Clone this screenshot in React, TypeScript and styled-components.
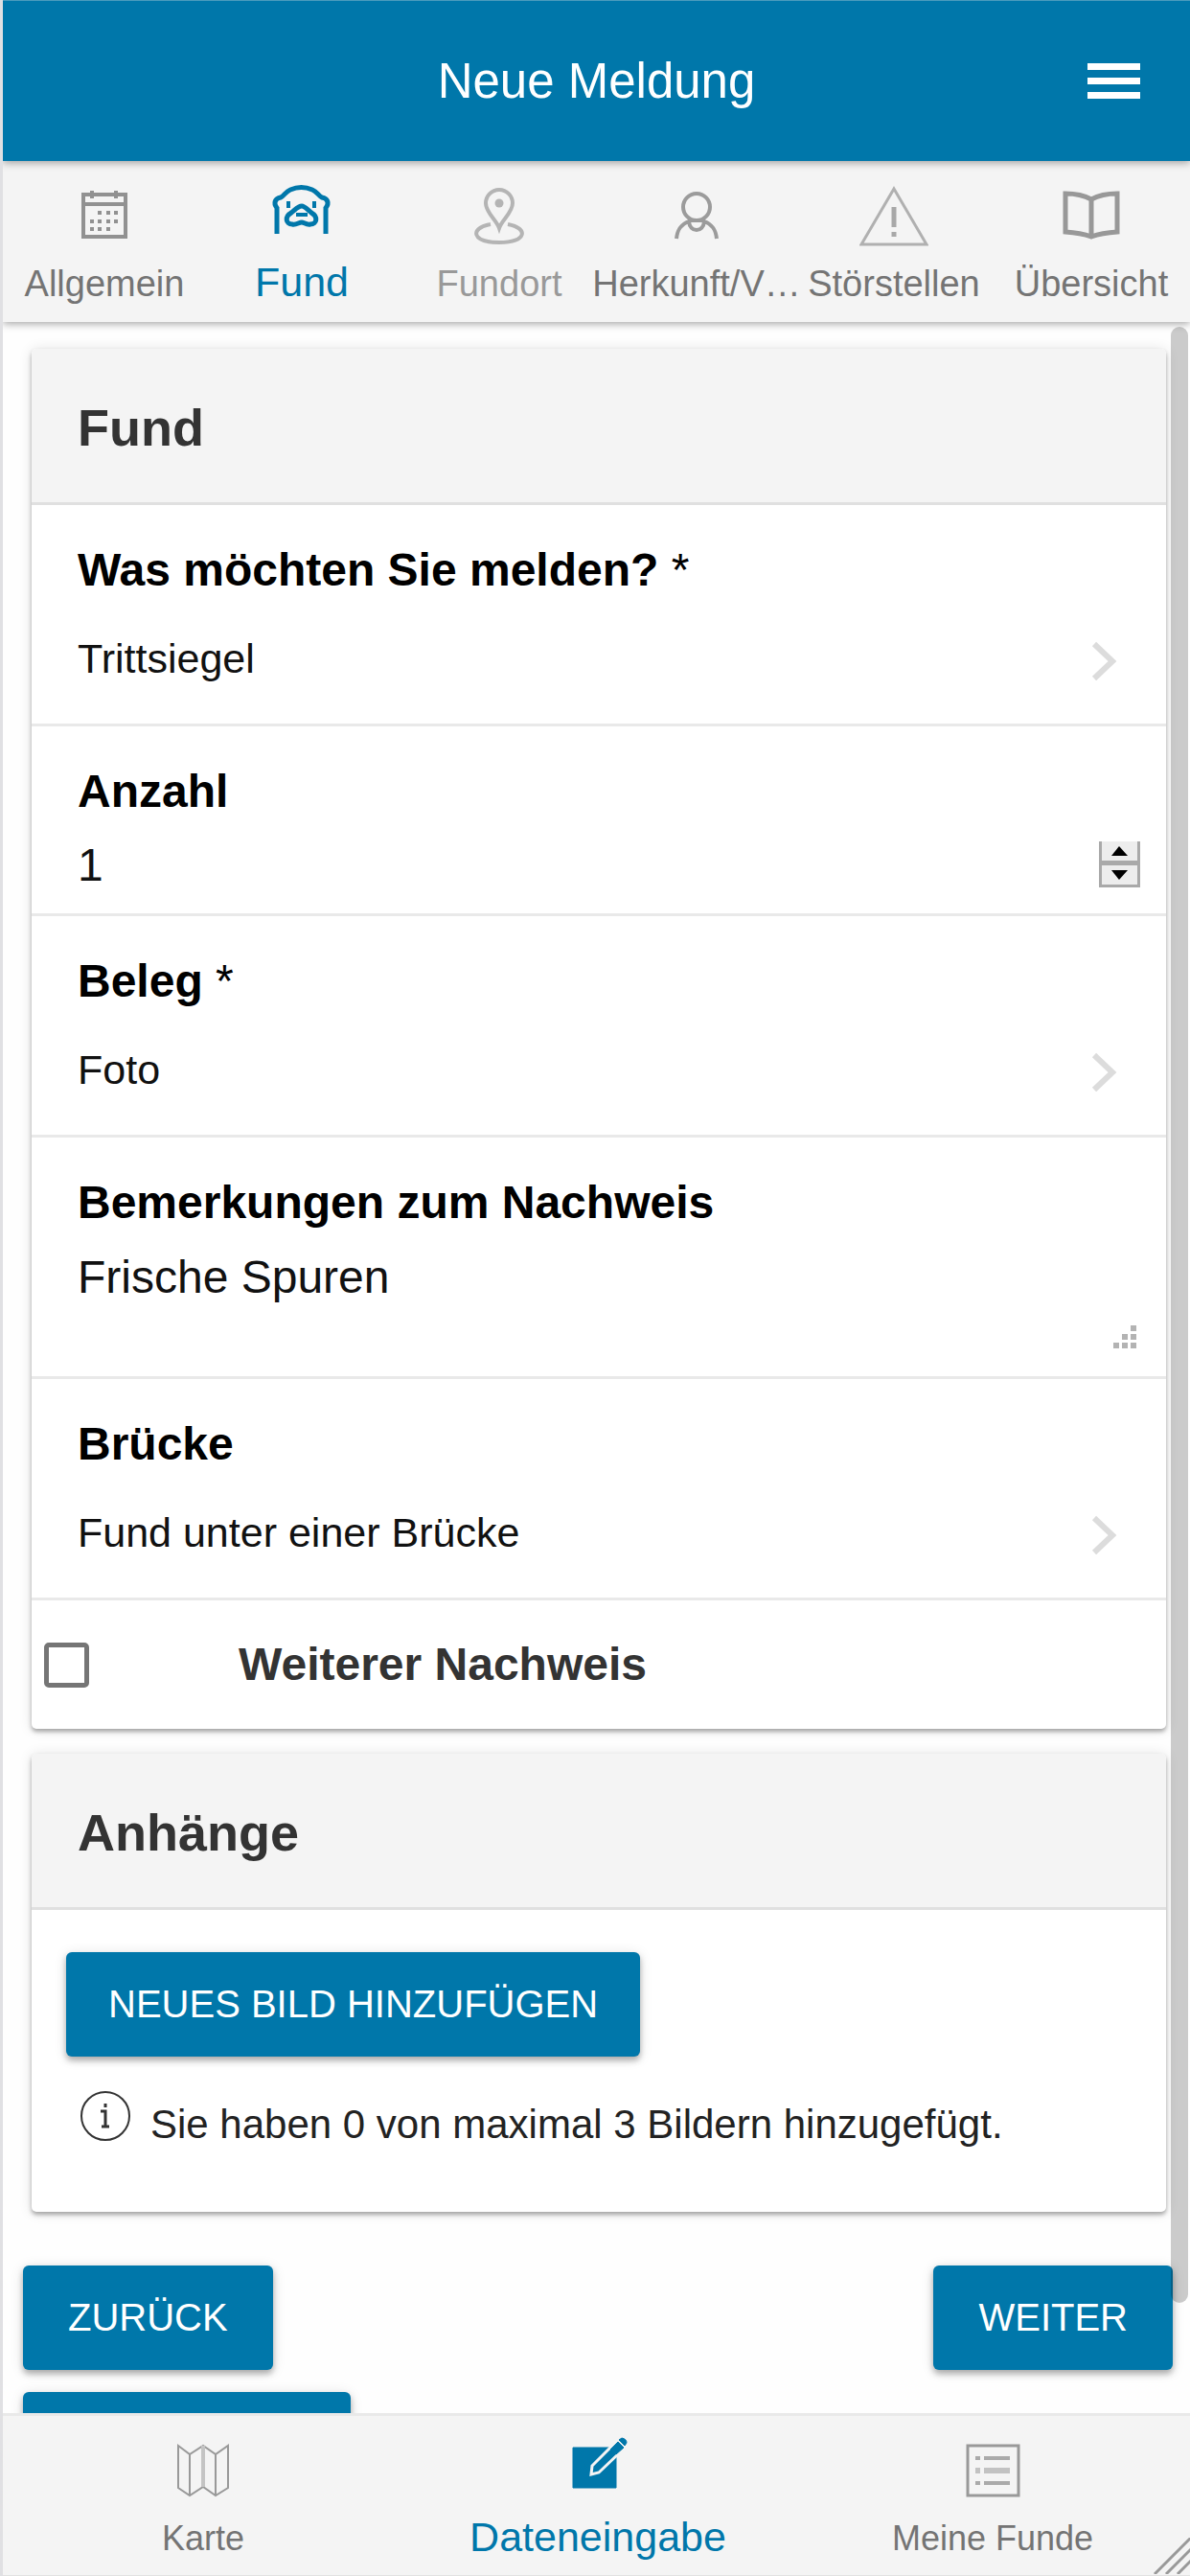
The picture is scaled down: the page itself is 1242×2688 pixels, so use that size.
import React, { useId, useState } from 'react';
import styled, { createGlobalStyle } from 'styled-components';

const brand = '#0077aa';
const panel = '#f4f4f4';
const fontStack = '"Liberation Sans", Arial, sans-serif';

const GlobalStyle = createGlobalStyle`
  *, *::before, *::after { box-sizing: border-box; }
  html, body, #root { height: 100%; }
  body {
    margin: 0;
    background: #fefefe;
    color: #000;
    font-family: ${fontStack};
  }
  button, input, select, textarea { font-family: inherit; }
`;

const Shell = styled.div`
  display: flex;
  flex-direction: column;
  position: relative;
  height: 100vh;
  overflow: hidden;
  border-left: 3px solid #e0e0e3;
  background: #fefefe;
`;

const Header = styled.header`
  display: grid;
  grid-template-columns: 1fr auto 1fr;
  align-items: center;
  flex: none;
  height: 168px;
  padding: 0 52px;
  background: ${brand};
  border-top: 1px solid #4a9bbd;
  color: #fff;
  z-index: 3;
  box-shadow: 0 2px 8px rgba(0, 0, 0, 0.35);
`;

const Title = styled.h1`
  grid-column: 2;
  margin: 0;
  font-size: 51px;
  line-height: 56px;
  font-weight: 400;
`;

const MenuButton = styled.button`
  justify-self: end;
  display: grid;
  gap: 8px;
  width: 55px;
  padding: 0;
  border: 0;
  background: none;
  cursor: pointer;
`;

const MenuBar = styled.span`
  height: 7px;
  background: #fff;
`;

const Tabs = styled.nav`
  display: grid;
  grid-template-columns: repeat(6, minmax(0, 1fr));
  flex: none;
  height: 168px;
  padding-left: 3px;
  background: ${panel};
  z-index: 2;
  box-shadow: 0 2px 8px rgba(0, 0, 0, 0.35);
`;

const BottomBar = styled.nav`
  display: grid;
  grid-template-columns: repeat(3, minmax(0, 1fr));
  flex: none;
  height: 170px;
  padding-left: 3px;
  background: ${panel};
  border-top: 3px solid #e9e9e9;
  border-bottom: 1px solid #e2e2e2;
  z-index: 2;
`;

const TabLink = styled.a<{ $size: number; $active?: boolean; $muted?: boolean }>`
  display: flex;
  flex-direction: column;
  align-items: center;
  padding-top: 20px;
  gap: 12px;
  color: ${p => (p.$active ? brand : p.$muted ? '#999' : '#747474')};
  font-size: ${p => (p.$active ? 43 : p.$size)}px;
  line-height: ${p => (p.$active ? 44 : 48)}px;
  white-space: nowrap;
  text-decoration: none;
`;

const TabIcon = styled.svg`
  flex: none;
  width: 72px;
  height: 72px;
  fill: none;
  stroke: currentColor;
`;

const Viewport = styled.main`
  flex: 1;
  min-height: 0;
  overflow: hidden;
  padding: 28px 25px 0 30px;
`;

const Card = styled.section`
  margin-bottom: 26px;
  border-radius: 5px;
  background: #fff;
  box-shadow: 0 3px 4px rgba(0, 0, 0, 0.3), 0 1px 14px rgba(0, 0, 0, 0.12);
`;

const CardTitle = styled.h2`
  display: flex;
  align-items: center;
  height: 163px;
  margin: 0;
  padding: 4px 48px 0;
  border-bottom: 3px solid #e0e0e0;
  border-radius: 5px 5px 0 0;
  background: ${panel};
  color: #333;
  font-size: 54px;
  line-height: 60px;
`;

const Field = styled.div`
  display: flex;
  flex-direction: column;
  position: relative;
  padding: 40px 27px 0 48px;
  border-bottom: 3px solid #e9e9e9;
`;

const SelectField = styled(Field)`
  height: 231px;
`;

const NumberField = styled(Field)`
  height: 198px;
`;

const TextField = styled(Field)`
  height: 252px;
`;

const Label = styled.label`
  font-size: 48px;
  line-height: 56px;
  font-weight: 700;
`;

const Star = styled.span`
  font-weight: 400;
`;

const SelectRow = styled.div`
  display: flex;
  align-items: flex-end;
  height: 60px;
  margin-top: 34px;
  padding-right: 24px;
`;

const Select = styled.select`
  flex: 1;
  min-width: 0;
  height: 60px;
  padding: 0;
  border: 0;
  background: none;
  appearance: none;
  color: #111;
  font-size: 43px;
  outline: none;
`;

const Chevron = styled.svg`
  width: 28px;
  height: 54px;
  fill: none;
  stroke: #dcdcdc;
  stroke-width: 6;
`;

const NumberRow = styled.div`
  display: flex;
  align-items: center;
  height: 56px;
  margin-top: 20px;
`;

const NumberInput = styled.input`
  flex: 1;
  min-width: 0;
  height: 56px;
  padding: 0;
  border: 0;
  background: none;
  color: #111;
  font-size: 48px;
  outline: none;
  appearance: textfield;
  &::-webkit-inner-spin-button,
  &::-webkit-outer-spin-button { appearance: none; margin: 0; }
`;

const Spinner = styled.div`
  display: grid;
  grid-template-rows: 1fr 1fr;
  gap: 5px;
  width: 43px;
  height: 48px;
  padding: 0 3px 3px;
  background: #a9a9a9;
`;

const SpinButton = styled.button`
  display: grid;
  place-items: center;
  min-height: 0;
  padding: 0;
  border: 0;
  background: #ededed;
`;

const Arrow = styled.svg`
  width: 17px;
  height: 10px;
  fill: #000;
`;

const TextArea = styled.textarea`
  height: 100px;
  margin-top: 22px;
  padding: 0;
  border: 0;
  background: none;
  resize: none;
  color: #111;
  font-size: 48px;
  line-height: 56px;
  outline: none;
`;

const Grip = styled.svg`
  position: absolute;
  right: 31px;
  bottom: 29px;
  width: 24px;
  height: 24px;
  fill: #b3b3b3;
`;

const CheckLabel = styled.label`
  display: flex;
  align-items: center;
  gap: 156px;
  height: 134px;
  padding-left: 13px;
  color: #333;
  font-size: 48px;
  line-height: 56px;
  font-weight: 700;
`;

const CheckBox = styled.input`
  width: 47px;
  height: 47px;
  margin: 0;
  border: 5px solid #757575;
  border-radius: 5px;
  background: #fff;
  appearance: none;
  &:checked { background: ${brand}; }
`;

const Attachments = styled.div`
  padding: 44px 36px 63px;
`;

const Button = styled.button<{ $pad: number }>`
  display: block;
  height: 109px;
  padding: 0 ${p => p.$pad}px;
  border: 0;
  border-radius: 6px;
  background: ${brand};
  color: #fff;
  font-size: 40px;
  text-transform: uppercase;
  white-space: nowrap;
  cursor: pointer;
  box-shadow: 0 4px 6px rgba(0, 0, 0, 0.28), 0 2px 14px rgba(0, 0, 0, 0.12);
`;

const WideButton = styled(Button)`
  width: 342px;
`;

const Info = styled.p`
  display: flex;
  gap: 20px;
  margin: 35px 0 0;
  padding-left: 14px;
  color: #222;
  font-size: 42px;
  line-height: 56px;
`;

const InfoIcon = styled.svg`
  flex: none;
  width: 54px;
  height: 54px;
  fill: none;
  stroke: #333;
`;

const InfoText = styled.span`
  padding-top: 8px;
`;

const Actions = styled.div`
  display: flex;
  flex-direction: column;
  align-items: flex-start;
  gap: 23px;
  margin: 56px -7px 0 -9px;
`;

const ActionRow = styled.div`
  display: flex;
  justify-content: space-between;
  width: 100%;
`;

const ScrollThumb = styled.div`
  position: absolute;
  top: 341px;
  right: 2px;
  bottom: 285px;
  width: 18px;
  border-radius: 9px;
  background: rgba(0, 0, 0, 0.2);
  z-index: 1;
`;

const WindowGrip = styled.svg`
  position: absolute;
  right: 0;
  bottom: 2px;
  width: 38px;
  height: 38px;
  fill: none;
  stroke: #999;
  stroke-width: 3;
  z-index: 3;
`;

const CalendarIcon = () => (
  <TabIcon viewBox="0 0 72 72" strokeWidth="4">
    <path d="M14 15H58V59H14ZM14 25H58M23 11V19M48 11V19" stroke="#919191" />
    <path
      d="M29 34h4M38 34h4M46 34h4M21 43h4M29 43h4M38 43h4M46 43h4M21 51h4M29 51h4M38 51h4"
      stroke="#919191"
    />
  </TabIcon>
);

const OtterIcon = () => (
  <TabIcon viewBox="0 0 72 72" strokeWidth="5">
    <path d="M10 56V29C6 24 8 19 14 18C18 16 19 12 24 10C31 7 40 7 47 10C52 12 53 16 57 18C63 19 65 24 61 29V56" />
    <path d="M22 22V29M49 22V29" strokeWidth="4" />
    <path d="M36 27C32 27 29 31 25 34C18 38 19 46 26 46C30 47 33 44 36 44C38 44 41 47 45 46C52 46 53 38 46 34C42 31 39 27 36 27Z" />
    <path d="M30 36H42" strokeWidth="4" />
  </TabIcon>
);

const PinIcon = () => (
  <TabIcon viewBox="0 0 72 72" strokeWidth="4">
    <path
      d="M36 50C33 41 22 34 22 24A14 14 0 0 1 50 24C50 34 39 41 36 50Z"
      stroke="#b4b4b4"
    />
    <circle cx="36" cy="24" r="4.5" fill="#b4b4b4" stroke="none" />
    <path d="M27 46C5 50 7 65 36 65C65 65 67 50 45 46" stroke="#b4b4b4" />
  </TabIcon>
);

const PersonIcon = () => (
  <TabIcon viewBox="0 0 72 72" strokeWidth="4">
    <circle cx="36" cy="28" r="14" stroke="#9b9b9b" />
    <path
      d="M15 61C16 51 20 46 28 43C29 55 43 55 44 43C52 46 56 51 57 61M27 42H45"
      stroke="#9b9b9b"
    />
  </TabIcon>
);

const WarningIcon = () => (
  <TabIcon viewBox="0 0 72 72" strokeWidth="3">
    <path d="M36 9L70 67H2Z" stroke="#b0b0b0" />
    <path d="M36 28V49M36 54V59" stroke="#a8a8a8" strokeWidth="5" />
  </TabIcon>
);

const BookIcon = () => (
  <TabIcon viewBox="0 0 72 72" strokeWidth="5">
    <path d="M9 14Q25 14 36 20Q47 14 63 14V54Q47 55 36 59Q25 55 9 54ZM36 20V59" stroke="#989898" />
  </TabIcon>
);

const MapIcon = () => (
  <TabIcon viewBox="0 0 72 72" strokeWidth="2">
    <path
      d="M10 11L22 20L36 11L49 20L62 11V55L49 63L36 54L22 63L10 55ZM22 20V63M49 20V63"
      stroke="#999"
    />
    <path d="M36 11V54" stroke="#c4c4c4" strokeWidth="4" />
  </TabIcon>
);

const EditIcon = () => (
  <TabIcon viewBox="0 0 72 72" stroke="none">
    <path d="M10 13H55V55H10Z" fill={brand} />
    <path d="M30 32L50 12L57 20L37 39L29 41Z" fill={brand} stroke={panel} strokeWidth="3" />
    <path d="M49 15L57 7L63 13L55 20Z" fill={brand} />
    <path d="M58 5L61 3Q66 4 66 8L64 11Z" fill={brand} />
  </TabIcon>
);

const ListIcon = () => (
  <TabIcon viewBox="0 0 72 72" strokeWidth="3">
    <path d="M10 11H63V63H10Z" stroke="#999" />
    <path d="M18 24h5M27 24H54M18 50h5M27 50H54" stroke="#aaa" strokeWidth="4" />
    <path d="M18 37h5M27 37H54" stroke="#c2c2c2" strokeWidth="6" />
  </TabIcon>
);

const steps = [
  { label: 'Allgemein', icon: <CalendarIcon /> },
  { label: 'Fund', icon: <OtterIcon />, active: true },
  { label: 'Fundort', icon: <PinIcon />, muted: true },
  { label: 'Herkunft/V…', icon: <PersonIcon /> },
  { label: 'Störstellen', icon: <WarningIcon /> },
  { label: 'Übersicht', icon: <BookIcon /> },
];

const sections = [
  { label: 'Karte', icon: <MapIcon /> },
  { label: 'Dateneingabe', icon: <EditIcon />, active: true },
  { label: 'Meine Funde', icon: <ListIcon /> },
];

function Dropdown({ label, value, required }: { label: string; value: string; required?: boolean }) {
  const id = useId();
  return (
    <SelectField>
      <Label htmlFor={id}>
        {label}
        {required && <Star> *</Star>}
      </Label>
      <SelectRow>
        <Select id={id} defaultValue={value}>
          <option value={value}>{value}</option>
        </Select>
        <Chevron viewBox="0 0 28 54" aria-hidden="true">
          <path d="M4 9L23 27L4 45" />
        </Chevron>
      </SelectRow>
    </SelectField>
  );
}

export default function App() {
  const [count, setCount] = useState(1);
  return (
    <>
      <GlobalStyle />
      <Shell>
        <Header>
          <Title>Neue Meldung</Title>
          <MenuButton aria-label="Menü">
            <MenuBar />
            <MenuBar />
            <MenuBar />
          </MenuButton>
        </Header>
        <Tabs>
          {steps.map(s => (
            <TabLink key={s.label} href="#" $size={38} $active={s.active} $muted={s.muted}>
              {s.icon}
              {s.label}
            </TabLink>
          ))}
        </Tabs>
        <Viewport>
          <Card>
            <CardTitle>Fund</CardTitle>
            <Dropdown label="Was möchten Sie melden?" value="Trittsiegel" required />
            <NumberField>
              <Label htmlFor="count">Anzahl</Label>
              <NumberRow>
                <NumberInput
                  id="count"
                  type="number"
                  value={count}
                  onChange={e => setCount(Number(e.target.value))}
                />
                <Spinner>
                  <SpinButton aria-label="Mehr" onClick={() => setCount(count + 1)}>
                    <Arrow viewBox="0 0 17 10"><path d="M8 0L17 10H0Z" /></Arrow>
                  </SpinButton>
                  <SpinButton aria-label="Weniger" onClick={() => setCount(count - 1)}>
                    <Arrow viewBox="0 0 17 10"><path d="M0 0H17L8 10Z" /></Arrow>
                  </SpinButton>
                </Spinner>
              </NumberRow>
            </NumberField>
            <Dropdown label="Beleg" value="Foto" required />
            <TextField>
              <Label htmlFor="remarks">Bemerkungen zum Nachweis</Label>
              <TextArea id="remarks" defaultValue="Frische Spuren" />
              <Grip viewBox="0 0 24 24" aria-hidden="true">
                <path d="M18 0h6v6h-6zM9 9h6v6h-6zM18 9h6v6h-6zM0 18h6v6h-6zM9 18h6v6h-6zM18 18h6v6h-6z" />
              </Grip>
            </TextField>
            <Dropdown label="Brücke" value="Fund unter einer Brücke" />
            <CheckLabel>
              <CheckBox type="checkbox" />
              Weiterer Nachweis
            </CheckLabel>
          </Card>
          <Card>
            <CardTitle>Anhänge</CardTitle>
            <Attachments>
              <Button $pad={44}>Neues Bild hinzufügen</Button>
              <Info>
                <InfoIcon viewBox="0 0 54 54" aria-hidden="true">
                  <circle cx="27" cy="27" r="25" strokeWidth="2" />
                  <path d="M27 14V18M22 22H27V38M23 38H31" strokeWidth="3" />
                </InfoIcon>
                <InfoText>Sie haben 0 von maximal 3 Bildern hinzugefügt.</InfoText>
              </Info>
            </Attachments>
          </Card>
          <Actions>
            <ActionRow>
              <Button $pad={47}>Zurück</Button>
              <Button $pad={47}>Weiter</Button>
            </ActionRow>
            <WideButton $pad={47} aria-label="Abbrechen" />
          </Actions>
        </Viewport>
        <BottomBar>
          {sections.map(s => (
            <TabLink key={s.label} href="#" $size={36} $active={s.active}>
              {s.icon}
              {s.label}
            </TabLink>
          ))}
        </BottomBar>
        <ScrollThumb />
        <WindowGrip viewBox="0 0 38 38" aria-hidden="true">
          <path d="M1 38L39 0M13 38L39 12M25 38L39 24" />
        </WindowGrip>
      </Shell>
    </>
  );
}
